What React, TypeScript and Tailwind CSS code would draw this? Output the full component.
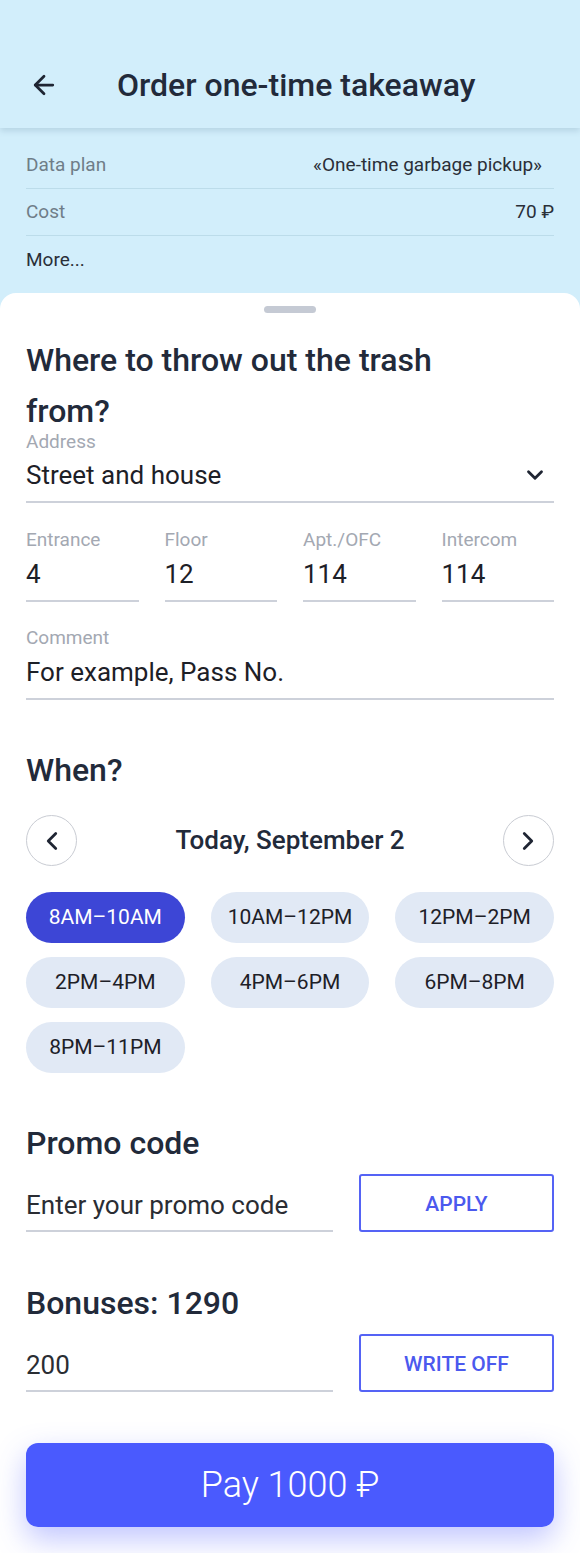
import { ArrowLeft, ChevronDown, ChevronLeft, ChevronRight } from "lucide-react"

const slots = [
  "8AM–10AM",
  "10AM–12PM",
  "12PM–2PM",
  "2PM–4PM",
  "4PM–6PM",
  "6PM–8PM",
  "8PM–11PM",
]

const smallFields = [
  { label: "Entrance", value: "4" },
  { label: "Floor", value: "12" },
  { label: "Apt./OFC", value: "114" },
  { label: "Intercom", value: "114" },
]

export default function App() {
  return (
    <div className="flex min-h-[1553px] w-[580px] flex-col bg-[#d2eefb] font-['Roboto','Liberation_Sans',sans-serif] text-[#1c1f26]">
      {/* Top bar */}
      <header className="relative z-10 h-[128px] bg-[#d2eefb] pt-[60px] shadow-[0_3px_6px_rgba(60,100,130,0.18)]">
        <div className="flex h-[50px] items-center">
          <ArrowLeft className="ml-[29px] h-[30px] w-[30px] text-[#1f2533]" strokeWidth={2.2} />
          <h1 className="ml-[58px] text-[32px] font-medium text-[#222a3a]">Order one-time takeaway</h1>
        </div>
      </header>

      {/* Tariff info */}
      <section className="px-[26px] pt-[15px] pb-[9px] text-[19px]">
        <div className="flex h-[46px] items-center justify-between border-b border-[#bcdcea]">
          <span className="text-[#6f7d88]">Data plan</span>
          <span className="mr-[12px] text-[#2a2f38]">«One-time garbage pickup»</span>
        </div>
        <div className="flex h-[47px] items-center justify-between border-b border-[#bcdcea]">
          <span className="text-[#6f7d88]">Cost</span>
          <span className="text-[#2a2f38]">70 ₽</span>
        </div>
        <div className="flex h-[48px] items-center">
          <span className="text-[#2a2f38]">More...</span>
        </div>
      </section>

      {/* Bottom sheet */}
      <main className="flex-1 rounded-t-[16px] bg-white px-[26px] pb-[26px]">
        <div className="flex justify-center pt-[13px]">
          <div className="h-[7px] w-[52px] rounded-full bg-[#c5cad4]" />
        </div>

        <h2 className="mt-[22px] w-[450px] text-[32px] leading-[51px] font-medium text-[#222a3a]">
          Where to throw out the trash from?
        </h2>

        <div className="-mt-[5px] border-b-2 border-[#cdd1da] pb-[11px]">
          <div className="text-[19px] leading-[20px] text-[#a3a8b2]">Address</div>
          <div className="mt-[8px] flex items-center justify-between">
            <span className="text-[26px] leading-[30px] text-[#1d2027]">Street and house</span>
            <ChevronDown className="mr-[6px] h-[26px] w-[26px] text-[#1f2533]" strokeWidth={2.6} />
          </div>
        </div>

        <div className="mt-[27px] grid grid-cols-4 gap-[26px]">
          {smallFields.map((f) => (
            <div key={f.label} className="border-b-2 border-[#cdd1da] pb-[11px]">
              <div className="text-[19px] leading-[20px] text-[#a3a8b2]">{f.label}</div>
              <div className="mt-[9px] text-[26px] leading-[30px] text-[#1d2027]">{f.value}</div>
            </div>
          ))}
        </div>

        <div className="mt-[26px] border-b-2 border-[#cdd1da] pb-[11px]">
          <div className="text-[19px] leading-[20px] text-[#a3a8b2]">Comment</div>
          <div className="mt-[9px] text-[26px] leading-[30px] text-[#1d2027]">For example, Pass No.</div>
        </div>

        <h2 className="mt-[52px] text-[32px] leading-[36px] font-medium text-[#222a3a]">When?</h2>

        <div className="mt-[27px] flex items-center justify-between">
          <button className="flex h-[51px] w-[51px] items-center justify-center rounded-full border-[1.5px] border-[#c9ccd3]">
            <ChevronLeft className="h-[30px] w-[30px] text-[#1f2533]" strokeWidth={2.2} />
          </button>
          <span className="text-[26px] font-medium text-[#222a3a]">Today, September 2</span>
          <button className="flex h-[51px] w-[51px] items-center justify-center rounded-full border-[1.5px] border-[#c9ccd3]">
            <ChevronRight className="h-[30px] w-[30px] text-[#1f2533]" strokeWidth={2.2} />
          </button>
        </div>

        <div className="mt-[26px] grid grid-cols-3 gap-x-[26px] gap-y-[14px]">
          {slots.map((s, i) => (
            <button
              key={s}
              className={
                i === 0
                  ? "h-[51px] rounded-full bg-[#3d46d6] text-[21px] text-white"
                  : "h-[51px] rounded-full bg-[#e1e9f5] text-[21px] text-[#1d2027]"
              }
            >
              {s}
            </button>
          ))}
        </div>

        <h2 className="mt-[52px] text-[32px] leading-[36px] font-medium text-[#222a3a]">Promo code</h2>
        <div className="mt-[13px] flex gap-[26px]">
          <div className="flex flex-1 items-end border-b-2 border-[#cdd1da] pb-[10px]">
            <span className="text-[26px] leading-[30px] text-[#2a2d33]">Enter your promo code</span>
          </div>
          <button className="h-[58px] w-[195px] rounded-[3px] border-2 border-[#5563f5] pt-[3px] text-[21px] font-medium text-[#4b59ee]">
            APPLY
          </button>
        </div>

        <h2 className="mt-[53px] text-[32px] leading-[36px] font-medium text-[#222a3a]">Bonuses: 1290</h2>
        <div className="mt-[13px] flex gap-[26px]">
          <div className="flex flex-1 items-end border-b-2 border-[#cdd1da] pb-[10px]">
            <span className="text-[26px] leading-[30px] text-[#2a2d33]">200</span>
          </div>
          <button className="h-[58px] w-[195px] rounded-[3px] border-2 border-[#5563f5] pt-[3px] text-[21px] font-medium text-[#4b59ee]">
            WRITE OFF
          </button>
        </div>

        <button className="mt-[51px] h-[84px] w-full rounded-[12px] bg-[#4a5afe] text-[36px] font-light text-white shadow-[0_12px_30px_rgba(74,90,254,0.35)]">
          Pay 1000 ₽
        </button>
      </main>
    </div>
  )
}
